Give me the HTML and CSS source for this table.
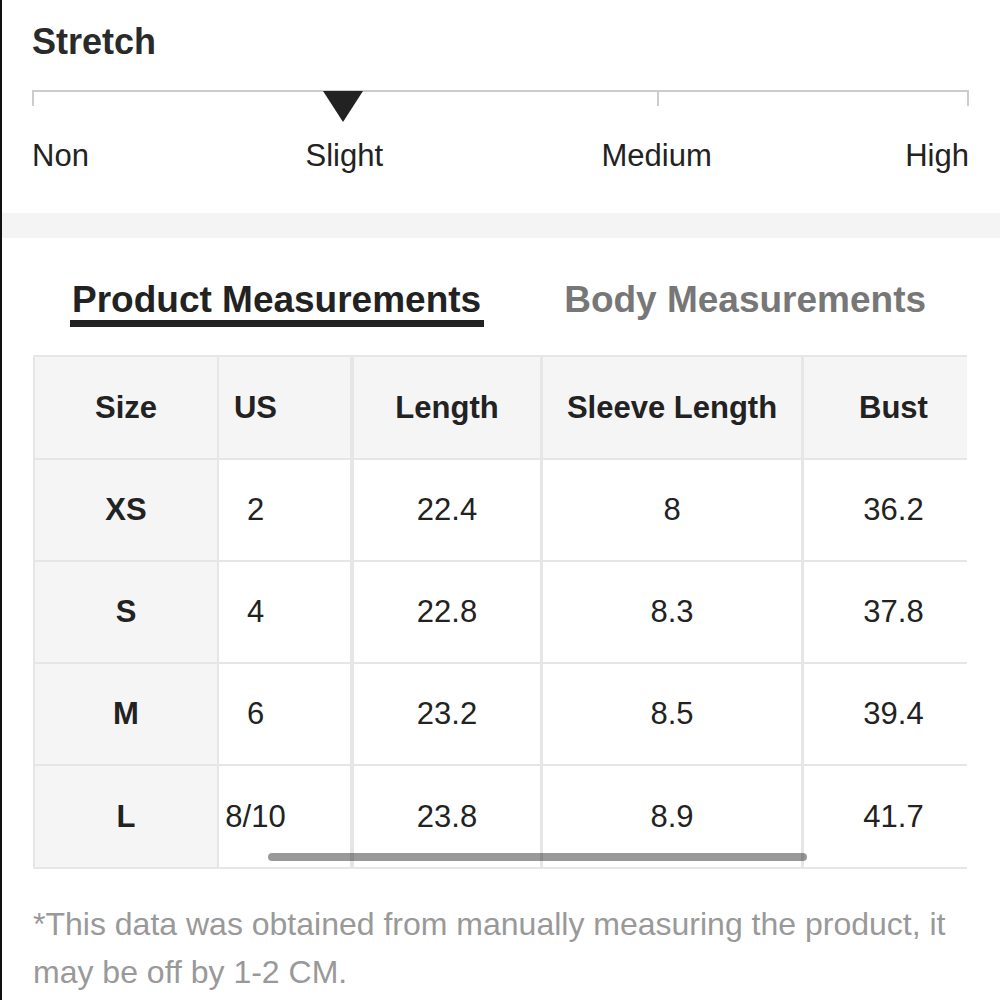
FILE: index.html
```html
<!DOCTYPE html>
<html lang="en">
<head>
<meta charset="utf-8">
<title>Size Guide</title>
<link rel="stylesheet" href="styles.css">
</head>
<body>
  <section class="stretch">
    <h2 class="stretch-title">Stretch</h2>
    <div class="scale">
      <div class="seg seg-1"></div>
      <div class="seg seg-2"></div>
      <div class="seg seg-3"></div>
      <span class="marker"></span>
    </div>
    <div class="scale-labels">
      <span class="lbl lbl-non">Non</span>
      <span class="lbl lbl-slight">Slight</span>
      <span class="lbl lbl-medium">Medium</span>
      <span class="lbl lbl-high">High</span>
    </div>
  </section>
  <div class="band"></div>
  <section class="measure">
    <div class="tabs">
      <div class="tab active">Product Measurements</div>
      <div class="tab">Body Measurements</div>
    </div>
    <div class="table-scroll">
      <div class="grid" role="table">
        <div class="cell head c1">Size</div>
        <div class="cell head c2">US</div>
        <div class="cell head">Length</div>
        <div class="cell head">Sleeve Length</div>
        <div class="cell head">Bust</div>

        <div class="cell size c1">XS</div>
        <div class="cell c2">2</div>
        <div class="cell">22.4</div>
        <div class="cell">8</div>
        <div class="cell">36.2</div>

        <div class="cell size c1">S</div>
        <div class="cell c2">4</div>
        <div class="cell">22.8</div>
        <div class="cell">8.3</div>
        <div class="cell">37.8</div>

        <div class="cell size c1">M</div>
        <div class="cell c2">6</div>
        <div class="cell">23.2</div>
        <div class="cell">8.5</div>
        <div class="cell">39.4</div>

        <div class="cell size c1 last">L</div>
        <div class="cell c2 last">8/10</div>
        <div class="cell last">23.8</div>
        <div class="cell last">8.9</div>
        <div class="cell last">41.7</div>
      </div>
      <div class="scrollbar"></div>
    </div>
    <p class="note">*This data was obtained from manually measuring the product, it may be off by 1-2 CM.</p>
  </section>
</body>
</html>
```
FILE: styles.css
```css
* { box-sizing: border-box; }

html, body {
  margin: 0;
  padding: 0;
  background: #fff;
}

body {
  border-left: 2px solid #111;
  min-height: 1000px;
  font-family: "Liberation Sans", Arial, Helvetica, sans-serif;
  color: #222;
}

.stretch {
  padding: 22px 31px 39px 30px;
}

.stretch-title {
  margin: 0;
  font-size: 36px;
  line-height: 40px;
  font-weight: bold;
  color: #2a2a2a;
}

.scale {
  position: relative;
  margin-top: 28px;
  display: grid;
  grid-template-columns: 1fr 1fr 1fr;
}

.seg {
  height: 16px;
  border-top: 2px solid #cccccc;
}

.seg-1 { border-left: 2px solid #cccccc; }
.seg-3 {
  border-left: 2px solid #cccccc;
  border-right: 2px solid #cccccc;
}

.marker {
  position: absolute;
  top: 1px;
  left: calc(33.333% - 21px);
  width: 0;
  height: 0;
  border-left: 20.5px solid transparent;
  border-right: 20.5px solid transparent;
  border-top: 31px solid #222;
}

.scale-labels {
  margin-top: 32px;
  display: grid;
  grid-template-columns: repeat(6, 1fr);
  font-size: 31px;
  line-height: 36px;
  color: #222;
}

.lbl-non { grid-column: 1 / 2; text-align: left; }
.lbl-slight { grid-column: 2 / 4; text-align: center; }
.lbl-medium { grid-column: 4 / 6; text-align: center; }
.lbl-high { grid-column: 6 / 7; text-align: right; }

.band {
  height: 25px;
  background: #f4f4f4;
}

.measure {
  padding: 42px 33px 0 31px;
}

.tabs {
  display: flex;
  gap: 78px;
  margin-left: 37px;
}

.tab {
  font-size: 37px;
  line-height: 40px;
  font-weight: bold;
  color: #777;
  padding: 0 3px 0 2px;
  border-bottom: 7px solid transparent;
}

.tab.active {
  color: #222;
  border-bottom-color: #222;
}

.table-scroll {
  position: relative;
  margin-top: 28px;
  overflow: hidden;
}

.grid {
  display: grid;
  grid-template-columns: 184px 135px 189px 261px 182px;
  width: max-content;
  border-top: 2px solid #e6e6e6;
  border-left: 2px solid #e6e6e6;
}

.cell {
  height: 102px;
  display: flex;
  align-items: center;
  justify-content: center;
  font-size: 31px;
  color: #222;
  border-right: 3px solid #e6e6e6;
  border-bottom: 2px solid #e6e6e6;
  background: #fff;
}

.cell.head {
  height: 103px;
  font-weight: bold;
  background: #f5f5f5;
}

.cell.last { height: 103px; }

.cell.c1 { border-right-width: 2px; }
.cell.c2 { padding-right: 58px; border-right-width: 4px; }

.cell.size {
  font-weight: bold;
  background: #f5f5f5;
}

.scrollbar {
  position: absolute;
  left: 235px;
  bottom: 8px;
  width: 539px;
  height: 8px;
  border-radius: 4px;
  background: rgba(0, 0, 0, 0.4);
}

.note {
  margin: 31px 0 0;
  font-size: 32px;
  line-height: 48px;
  color: #999;
}
```
